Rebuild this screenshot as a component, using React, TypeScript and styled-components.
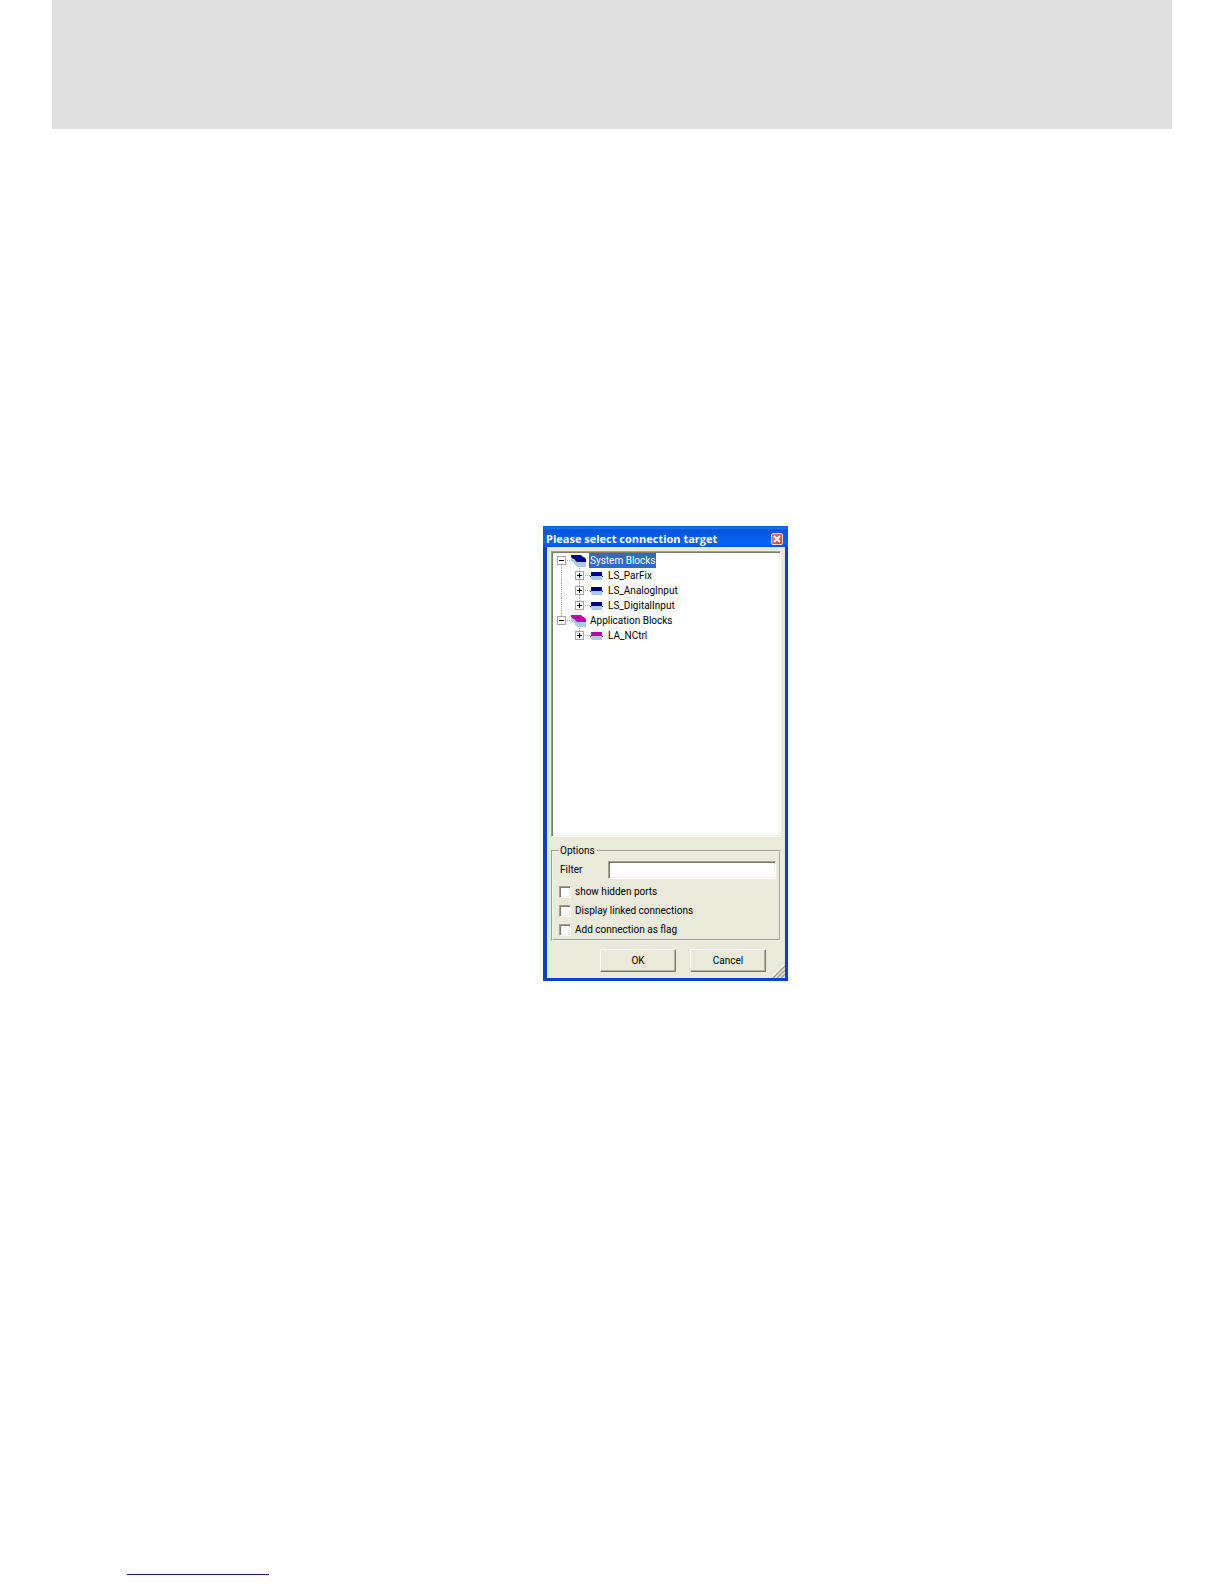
import React, { useState } from "react";
import styled, { createGlobalStyle, css } from "styled-components";

const GlobalStyle = createGlobalStyle`
  *, *::before, *::after { box-sizing: border-box; }
  body {
    margin: 0;
    background: #fff;
    color: #000;
    font: 10px/14px Roboto, "Liberation Sans", Arial, sans-serif;
  }
  button, input { font: inherit; color: inherit; }
`;

const Page = styled.div`
  display: flex;
  flex-direction: column;
  min-height: 100vh;
  padding: 0 52px;
`;

const Banner = styled.header`
  height: 129px;
  background: #e0e0e0;
`;

const Content = styled.main`
  display: grid;
  grid-template-columns: 491fr 245px 384fr;
  padding: 397px 0 40px;
`;

const Footer = styled.footer`
  display: flex;
  margin-top: auto;
  padding: 0 75px 9px;
`;

const FooterLink = styled.a`
  width: 142px;
  height: 14px;
  border-bottom: 1px solid #1a1a8c;
`;

const Dialog = styled.section`
  grid-column: 2;
  display: flex;
  flex-direction: column;
  background: #ebe9d9;
  border: solid #0a3fd2;
  border-width: 0 3px 3px 4px;
`;

const TitleBar = styled.header`
  display: flex;
  align-items: center;
  justify-content: space-between;
  height: 21px;
  margin: 0 -3px 0 -4px;
  padding: 4px 5px 0 3px;
  background: linear-gradient(#0a56d6 0, #1f74ea 2px, #0554dc 4px, #0560f0 14px, #0262fb 18px, #024ad6 21px);
`;

const Title = styled.h1`
  margin: 0;
  color: #fff;
  font: bold 11px/16px "Open Sans", "Noto Sans", sans-serif;
  white-space: nowrap;
`;

const CloseButton = styled.button`
  display: flex;
  width: 12px;
  height: 12px;
  padding: 0;
  border: 1px solid #f3d5d0;
  border-radius: 2px;
  background: linear-gradient(135deg, #de7c66, #c8442c);

  svg { display: block; width: 10px; height: 10px; }
`;

const Body = styled.form`
  position: relative;
  display: flex;
  flex-direction: column;
  padding: 4px 4px 6px;
  box-shadow: inset -1px 0 #d3e6ee, inset 1px 0 #f3f2ea;
`;

const sunken = css`
  border: 1px solid;
  border-color: #a3a093 #fff #fff #a3a093;
  background: #fff;
  box-shadow: inset 1px 1px #7d7a70, inset -1px -1px #f3f1e6;
`;

const Tree = styled.ul`
  ${sunken}
  height: 286px;
  margin: 0 0 7px;
  padding: 1px;
  list-style: none;
  overflow: hidden;
`;

const Branch = styled.ul`
  margin: 0;
  padding: 0;
  list-style: none;
`;

const TreeRow = styled.div`
  display: flex;
  height: 15px;

  svg { display: block; flex: none; }
`;

const Expander = styled.button`
  width: 18px;
  height: 15px;
  padding: 0;
  border: 0;
  background: none;
`;

const NodeName = styled.button<{ $selected: boolean }>`
  padding: 0 1px;
  border: 0;
  line-height: 15px;
  white-space: nowrap;
  background: ${(p) => (p.$selected ? "#316ac5" : "transparent")};
  color: ${(p) => (p.$selected ? "#fff" : "#000")};
`;

const Options = styled.fieldset`
  display: flex;
  flex-direction: column;
  gap: 1px;
  min-width: 0;
  margin: 0 0 8px;
  padding: 3px 3px 0 6px;
  border: 2px groove #f4f2e6;
`;

const Legend = styled.legend`
  padding: 0 2px 0 1px;
`;

const FilterRow = styled.div`
  display: grid;
  grid-template-columns: 48px 1fr;
  align-items: center;
  margin-bottom: 3px;
  padding-left: 1px;
`;

const FilterInput = styled.input`
  ${sunken}
  width: 100%;
  height: 18px;
  padding: 0 3px;
  outline: 0;
`;

const CheckRow = styled.label`
  display: flex;
  align-items: center;
  gap: 4px;
  height: 18px;
`;

const CheckBox = styled.input`
  ${sunken}
  appearance: none;
  width: 12px;
  height: 12px;
  margin: 0;

  &:checked { background: radial-gradient(#222 3px, #fff 4px); }
`;

const Actions = styled.div`
  display: flex;
  justify-content: flex-end;
  gap: 14px;
  padding-right: 15px;
`;

const PushButton = styled.button`
  width: 76px;
  height: 23px;
  padding: 0;
  border: 1px solid;
  border-color: #fff #7a776b #7a776b #fff;
  background: #ebe9d9;
  box-shadow: inset -1px -1px #b5b2a2;
`;

const Grip = styled.svg`
  position: absolute;
  right: 0;
  bottom: 0;
  width: 13px;
  height: 13px;
`;

type Tone = "system" | "application";

const toneColor: Record<Tone, string> = { system: "#00008b", application: "#c000b0" };

function Guide({ up = false, down = false, box = false, open = false }) {
  return (
    <svg width="18" height="15" viewBox="0 0 18 15" aria-hidden="true" shapeRendering="crispEdges">
      <g stroke="#a8a8a8" strokeDasharray="1 1">
        {up && <path d="M8.5 0V7" />}
        {down && <path d="M8.5 8V15" />}
        {box && <path d="M8 7.5H18" />}
      </g>
      {box && (
        <>
          <rect x="4.500" y="3.500" width="8" height="8" fill="#fff" stroke="#a4a4a4" />
          <path d={open ? "M6 7.5H11" : "M6 7.5H11M8.500 5V10"} stroke="#000" />
        </>
      )}
    </svg>
  );
}

function GroupIcon({ tone }: { tone: Tone }) {
  return (
    <svg width="18" height="15" viewBox="0 0 18 15" aria-hidden="true">
      <path d="M0 5L3 7H15V14H7L4 12V10H3L0 8Z" fill="#a9cbe6" />
      <path d="M0 2H10L12 4H13L15 6V9H6L3 6H2L0 4Z" fill={toneColor[tone]} />
    </svg>
  );
}

function BlockIcon({ tone }: { tone: Tone }) {
  return (
    <svg width="18" height="15" viewBox="0 0 18 15" aria-hidden="true" shapeRendering="crispEdges">
      <path d="M0 7.500H1" stroke="#a8a8a8" />
      <path d="M1 8.500H14" stroke="#333" />
      <path d="M2 8H13V12H3L2 11Z" fill="#a9cbe6" />
      <path d="M2 4H13V8H2Z" fill={toneColor[tone]} />
    </svg>
  );
}

const groups: { name: string; tone: Tone; blocks: string[] }[] = [
  { name: "System Blocks", tone: "system", blocks: ["LS_ParFix", "LS_AnalogInput", "LS_DigitalInput"] },
  { name: "Application Blocks", tone: "application", blocks: ["LA_NCtrl"] },
];

const switches = ["show hidden ports", "Display linked connections", "Add connection as flag"];

export default function App() {
  const [selected, setSelected] = useState("System Blocks");
  const [closed, setClosed] = useState<string[]>([]);

  const toggle = (name: string) =>
    setClosed((c) => (c.includes(name) ? c.filter((n) => n !== name) : [...c, name]));

  return (
    <Page>
      <GlobalStyle />
      <Banner />
      <Content>
        <Dialog role="dialog" aria-labelledby="dialog-title">
          <TitleBar>
            <Title id="dialog-title">Please select connection target</Title>
            <CloseButton type="button" aria-label="Close">
              <svg viewBox="0 0 10 10" aria-hidden="true">
                <path d="M2 2L8 8M8 2L2 8" stroke="#fff" strokeWidth="2" />
              </svg>
            </CloseButton>
          </TitleBar>
          <Body onSubmit={(e) => e.preventDefault()}>
            <Tree>
              {groups.map((group, g) => {
                const open = !closed.includes(group.name);
                const lastGroup = g === groups.length - 1;
                return (
                  <li key={group.name}>
                    <TreeRow>
                      <Expander type="button" aria-label={`Toggle ${group.name}`} aria-expanded={open} onClick={() => toggle(group.name)}>
                        <Guide up={g > 0} down={!lastGroup} box open={open} />
                      </Expander>
                      <GroupIcon tone={group.tone} />
                      <NodeName type="button" $selected={selected === group.name} onClick={() => setSelected(group.name)}>
                        {group.name}
                      </NodeName>
                    </TreeRow>
                    {open && (
                      <Branch>
                        {group.blocks.map((block, b) => (
                          <li key={block}>
                            <TreeRow>
                              <Guide up={!lastGroup} down={!lastGroup} />
                              <Expander type="button" aria-label={`Expand ${block}`}>
                                <Guide up down={b < group.blocks.length - 1} box />
                              </Expander>
                              <BlockIcon tone={group.tone} />
                              <NodeName type="button" $selected={selected === block} onClick={() => setSelected(block)}>
                                {block}
                              </NodeName>
                            </TreeRow>
                          </li>
                        ))}
                      </Branch>
                    )}
                  </li>
                );
              })}
            </Tree>
            <Options>
              <Legend>Options</Legend>
              <FilterRow>
                <label htmlFor="filter">Filter</label>
                <FilterInput id="filter" type="text" />
              </FilterRow>
              {switches.map((label) => (
                <CheckRow key={label}>
                  <CheckBox type="checkbox" />
                  {label}
                </CheckRow>
              ))}
            </Options>
            <Actions>
              <PushButton type="submit">OK</PushButton>
              <PushButton type="button">Cancel</PushButton>
            </Actions>
            <Grip viewBox="0 0 13 13" aria-hidden="true">
              <path d="M0 12L12 0M4 13L13 4M8 13L13 8" stroke="#fff" />
              <path d="M1 13L13 1M5 13L13 5M9 13L13 9" stroke="#9d9a8b" strokeWidth="1.500" />
            </Grip>
          </Body>
        </Dialog>
      </Content>
      <Footer>
        <FooterLink href="#top" aria-label="Back to top" />
      </Footer>
    </Page>
  );
}
